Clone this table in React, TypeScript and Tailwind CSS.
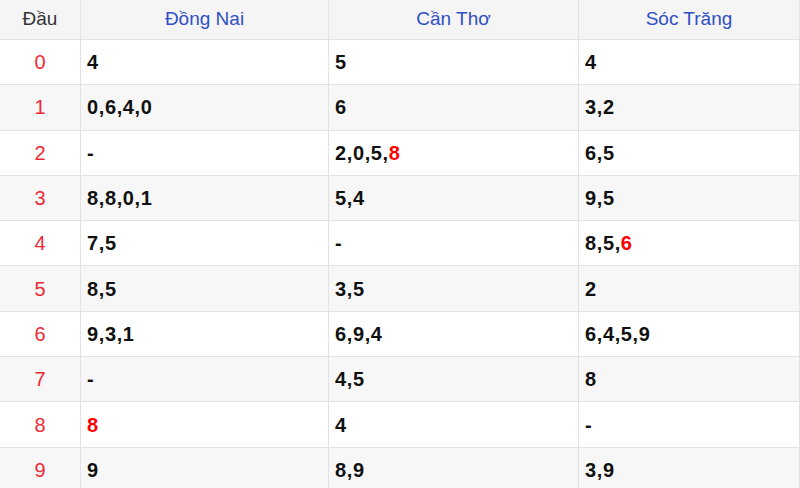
const provinces = ["Đồng Nai", "Cần Thơ", "Sóc Trăng"];

// each cell: list of digits, "!" prefix marks a red digit
const rows: string[][][] = [
  [["4"], ["5"], ["4"]],
  [["0", "6", "4", "0"], ["6"], ["3", "2"]],
  [["-"], ["2", "0", "5", "!8"], ["6", "5"]],
  [["8", "8", "0", "1"], ["5", "4"], ["9", "5"]],
  [["7", "5"], ["-"], ["8", "5", "!6"]],
  [["8", "5"], ["3", "5"], ["2"]],
  [["9", "3", "1"], ["6", "9", "4"], ["6", "4", "5", "9"]],
  [["-"], ["4", "5"], ["8"]],
  [["!8"], ["4"], ["-"]],
  [["9"], ["8", "9"], ["3", "9"]],
];

function Cell({ digits }: { digits: string[] }) {
  return (
    <div className="flex items-center pl-[6px] border-r border-b border-[#e2e2e2] font-bold text-[20px] tracking-[0.6px] text-[#111]">
      {digits.map((d, i) => (
        <span key={i}>
          {d.startsWith("!") ? <span className="text-[#ff0000]">{d.slice(1)}</span> : d}
          {i < digits.length - 1 ? "," : ""}
        </span>
      ))}
    </div>
  );
}

export default function App() {
  return (
    <div
      className="w-[800px] h-[488px] overflow-hidden bg-white"
      style={{ fontFamily: '"Liberation Sans", Arial, sans-serif' }}
    >
      <div className="grid grid-cols-[81px_248px_250px_1fr] auto-rows-[45.3px] [grid-template-rows:40px]">
        <div className="flex items-center justify-center bg-[#f5f5f5] border-r border-b border-[#e2e2e2] text-[19px] text-[#333]">
          Đầu
        </div>
        {provinces.map((p) => (
          <div
            key={p}
            className="flex items-center justify-center bg-[#f5f5f5] border-r border-b border-[#e2e2e2] text-[19px] text-[#2f4fc4]"
          >
            {p}
          </div>
        ))}
        {rows.map((row, r) => (
          <div key={r} className={`contents ${r % 2 === 1 ? "[&>div]:bg-[#f7f7f7]" : "[&>div]:bg-white"}`}>
            <div className="flex items-center justify-center border-r border-b border-[#e2e2e2] text-[20px] text-[#ee2a35]">
              {r}
            </div>
            {row.map((cell, c) => (
              <Cell key={c} digits={cell} />
            ))}
          </div>
        ))}
      </div>
    </div>
  );
}
